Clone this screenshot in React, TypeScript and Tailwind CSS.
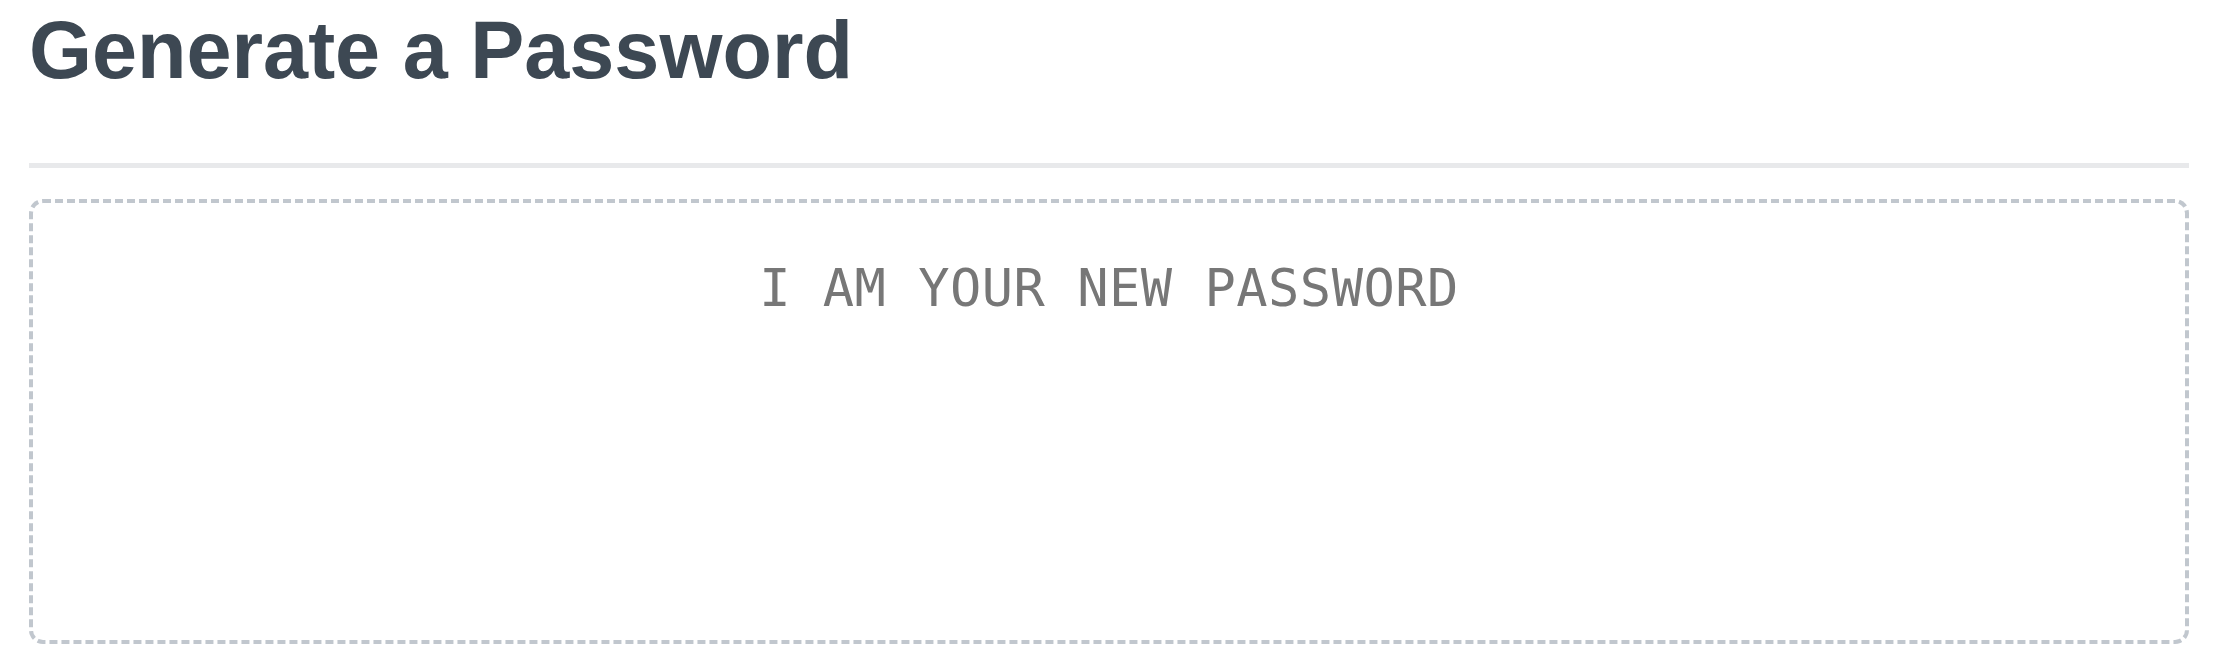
import React from 'react';

const App = () => {
  return (
    <div className="w-full min-h-screen bg-white pl-[29px] pr-[39px] pt-[10px]">
      <h1 className="text-[81px] leading-none font-bold text-[#3d4853] font-['Liberation_Sans',Arial,sans-serif]">
        Generate a Password
      </h1>

      <hr className="mt-[72px] border-0 h-[5px] bg-[#e8e9eb]" />

      <div className="mt-[31px] h-[445px] rounded-[14px] border-4 border-dashed border-[#c1c7ce] pt-[59px] text-center">
        <p className="text-[52px] leading-none tracking-[0.5px] text-[#777777] font-['DejaVu_Sans_Mono',monospace]">
          I AM YOUR NEW PASSWORD
        </p>
      </div>
    </div>
  );
};

export default App;
